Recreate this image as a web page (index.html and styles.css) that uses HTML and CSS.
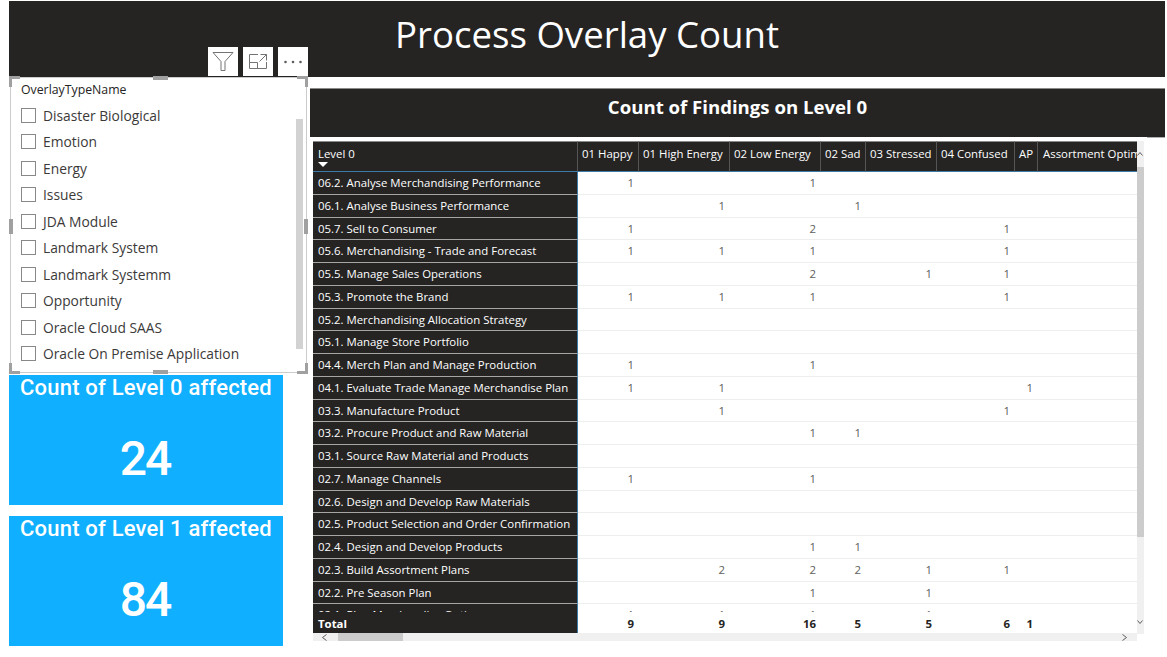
FILE: index.html
```html
<!DOCTYPE html>
<html lang="en">
<head>
  <meta charset="UTF-8" />
  <title>Process Overlay Count</title>
  <link rel="stylesheet" href="styles.css">
</head>
<body>
  <main class="page">
    <header class="page-title">Process Overlay Count</header>

    <section class="cards">
      <div class="card">
        <div class="card-label">Count of Level 0 affected</div>
        <div class="card-value">24</div>
      </div>
      <div class="card">
        <div class="card-label">Count of Level 1 affected</div>
        <div class="card-value">84</div>
      </div>
    </section>

    <section class="report">
      <h2 class="report-title">Count of Findings on Level 0</h2>
      <div class="matrix">
        <div class="matrix-main">
          <div class="row head">
            <div class="label">Level 0<i class="sort"></i></div>
            <div>01 Happy</div><div>01 High Energy</div><div>02 Low Energy</div><div>02 Sad</div><div>03 Stressed</div><div>04 Confused</div><div>AP</div><div class="clip">Assortment Optimisation</div>
          </div>
          <div class="matrix-body">
            <div class="row"><div class="label">06.2. Analyse Merchandising Performance</div><div>1</div><div></div><div>1</div><div></div><div></div><div></div><div></div><div></div></div>
            <div class="row"><div class="label">06.1. Analyse Business Performance</div><div></div><div>1</div><div></div><div>1</div><div></div><div></div><div></div><div></div></div>
            <div class="row"><div class="label">05.7. Sell to Consumer</div><div>1</div><div></div><div>2</div><div></div><div></div><div>1</div><div></div><div></div></div>
            <div class="row"><div class="label">05.6. Merchandising - Trade and Forecast</div><div>1</div><div>1</div><div>1</div><div></div><div></div><div>1</div><div></div><div></div></div>
            <div class="row"><div class="label">05.5. Manage Sales Operations</div><div></div><div></div><div>2</div><div></div><div>1</div><div>1</div><div></div><div></div></div>
            <div class="row"><div class="label">05.3. Promote the Brand</div><div>1</div><div>1</div><div>1</div><div></div><div></div><div>1</div><div></div><div></div></div>
            <div class="row"><div class="label">05.2. Merchandising Allocation Strategy</div><div></div><div></div><div></div><div></div><div></div><div></div><div></div><div></div></div>
            <div class="row"><div class="label">05.1. Manage Store Portfolio</div><div></div><div></div><div></div><div></div><div></div><div></div><div></div><div></div></div>
            <div class="row"><div class="label">04.4. Merch Plan and Manage Production</div><div>1</div><div></div><div>1</div><div></div><div></div><div></div><div></div><div></div></div>
            <div class="row"><div class="label">04.1. Evaluate Trade Manage Merchandise Plan</div><div>1</div><div>1</div><div></div><div></div><div></div><div></div><div>1</div><div></div></div>
            <div class="row"><div class="label">03.3. Manufacture Product</div><div></div><div>1</div><div></div><div></div><div></div><div>1</div><div></div><div></div></div>
            <div class="row"><div class="label">03.2. Procure Product and Raw Material</div><div></div><div></div><div>1</div><div>1</div><div></div><div></div><div></div><div></div></div>
            <div class="row"><div class="label">03.1. Source Raw Material and Products</div><div></div><div></div><div></div><div></div><div></div><div></div><div></div><div></div></div>
            <div class="row"><div class="label">02.7. Manage Channels</div><div>1</div><div></div><div>1</div><div></div><div></div><div></div><div></div><div></div></div>
            <div class="row"><div class="label">02.6. Design and Develop Raw Materials</div><div></div><div></div><div></div><div></div><div></div><div></div><div></div><div></div></div>
            <div class="row"><div class="label">02.5. Product Selection and Order Confirmation</div><div></div><div></div><div></div><div></div><div></div><div></div><div></div><div></div></div>
            <div class="row"><div class="label">02.4. Design and Develop Products</div><div></div><div></div><div>1</div><div>1</div><div></div><div></div><div></div><div></div></div>
            <div class="row"><div class="label">02.3. Build Assortment Plans</div><div></div><div>2</div><div>2</div><div>2</div><div>1</div><div>1</div><div></div><div></div></div>
            <div class="row"><div class="label">02.2. Pre Season Plan</div><div></div><div></div><div>1</div><div></div><div>1</div><div></div><div></div><div></div></div>
            <div class="row"><div class="label">02.1. Plan Merchandise Options</div><div>1</div><div>1</div><div>1</div><div></div><div>1</div><div></div><div></div><div></div></div>
          </div>
          <div class="row total">
            <div class="label">Total</div>
            <div>9</div><div>9</div><div>16</div><div>5</div><div>5</div><div>6</div><div>1</div><div></div>
          </div>
          <div class="hscroll">
            <svg class="chevron" width="5" height="7" viewBox="0 0 5 7"><path d="M4.500 .5l-4 3 4 3"/></svg>
            <i class="hthumb"></i>
            <svg class="chevron next" width="5" height="7" viewBox="0 0 5 7"><path d="M.5 .5l4 3-4 3"/></svg>
          </div>
        </div>
        <div class="vscroll">
          <svg class="chevron up" width="6" height="4" viewBox="0 0 6 4"><path d="M.5 3.500L3 .5l2.500 3"/></svg>
          <i class="vthumb"></i>
          <svg class="chevron down" width="6" height="4" viewBox="0 0 6 4"><path d="M.5 .5L3 3.500 5.500 .5"/></svg>
        </div>
      </div>
    </section>

    <!-- focused slicer sits over the header and the first card -->
    <aside class="slicer">
      <div class="toolbar">
        <button class="tool" type="button">
          <svg width="22" height="19" viewBox="0 0 22 19" fill="none" stroke="#737373" stroke-width="1"><path d="M1 .5h20l-8 9v9h-4v-9z"/></svg>
        </button>
        <button class="tool" type="button">
          <svg width="19" height="15" viewBox="0 0 19 15" fill="none" stroke="#737373" stroke-width="1"><path d="M9 .5H.5v14h17V8M.5 8.500h8v6M11.500 .5h6v6M17.500 .5l-7 7"/></svg>
        </button>
        <button class="tool" type="button">
          <svg width="20" height="4" viewBox="0 0 20 4" fill="#605e5c"><circle cx="2.500" cy="2" r="1.300"/><circle cx="10" cy="2" r="1.300"/><circle cx="17.500" cy="2" r="1.300"/></svg>
        </button>
      </div>
      <i class="handle tl"></i><i class="handle tr"></i><i class="handle bl"></i><i class="handle br"></i>
      <i class="grip top"></i><i class="grip bottom"></i><i class="grip left"></i><i class="grip right"></i>
      <div class="slicer-title">OverlayTypeName</div>
      <ul class="slicer-list">
        <li><i class="check"></i>Disaster Biological</li>
        <li><i class="check"></i>Emotion</li>
        <li><i class="check"></i>Energy</li>
        <li><i class="check"></i>Issues</li>
        <li><i class="check"></i>JDA Module</li>
        <li><i class="check"></i>Landmark System</li>
        <li><i class="check"></i>Landmark Systemm</li>
        <li><i class="check"></i>Opportunity</li>
        <li><i class="check"></i>Oracle Cloud SAAS</li>
        <li><i class="check"></i>Oracle On Premise Application</li>
      </ul>
      <i class="slicer-scroll"></i>
    </aside>
  </main>
</body>
</html>
```

FILE: styles.css
```css
:root {
  --dark: #252423;
  --blue: #11afff;
  --line-blue: #3c7aa8;
  --cols: 265px 61px 91px 91px 45px 71px 78px 23px 99px;
}

* {
  box-sizing: border-box;
}

html, body {
  margin: 0;
  height: 100%;
  overflow: hidden;
  background: #fff;
}

body {
  font-family: 'Open Sans', 'Liberation Sans', Arial, sans-serif;
  color: #252423;
}

.page {
  position: relative;
  display: grid;
  grid-template-columns: 274px 855px;
  grid-template-rows: 76px auto;
  column-gap: 27px;
  padding: 1px 0 0 9px;
}

.page-title {
  grid-column: 1 / -1;
  background: var(--dark);
  color: #fff;
  text-align: center;
  font-size: 36.600px;
  line-height: 67px;
}

/* cards */
.cards {
  display: flex;
  flex-direction: column;
  gap: 10.500px;
  padding-top: 298px;
}

.card {
  height: 130px;
  background: var(--blue);
  color: #fff;
  text-align: center;
  font-family: Roboto, 'Open Sans', sans-serif;
}

.card-label {
  font-size: 22px;
  font-weight: 500;
  line-height: 25px;
  letter-spacing: 0.2px;
}

.card-value {
  margin-top: 27px;
  padding-right: 2px;
  font-size: 48px;
  font-weight: 500;
  line-height: 64px;
  letter-spacing: -2px;
}

/* matrix */
.report {
  padding-top: 11px;
}

.report-title {
  position: relative;
  margin: 0 0 4px;
  height: 49px;
  border-top: 1px solid #8a8a8a;
  background: var(--dark);
  color: #fff;
  text-align: center;
  font-size: 18.600px;
  font-weight: 700;
  line-height: 36px;
}

.report-title::after {
  content: "";
  position: absolute;
  right: 0;
  bottom: -1px;
  width: 18px;
  height: 1px;
  background: #b0b0b0;
}

.matrix {
  display: flex;
  padding-left: 3px;
  font-size: 11.400px;
}

.matrix-main {
  width: 824px;
}

.row {
  display: grid;
  grid-template-columns: var(--cols);
  height: 22.760px;
}

.row > div {
  padding: 0 5px;
  text-align: right;
  line-height: 21px;
  color: #605e5c;
  border-bottom: 1px solid #eee;
  white-space: nowrap;
  overflow: hidden;
}

.row > .label {
  padding: 0 5px;
  background: var(--dark);
  color: #fff;
  text-align: left;
  border-bottom: 1px solid #a6a6a6;
  border-right: 1px solid var(--line-blue);
}

.head {
  height: 31px;
}

.row.head > div {
  position: relative;
  padding: 0 4px;
  background: var(--dark);
  color: #fff;
  line-height: 24px;
  text-align: left;
  border-top: 1px solid #8a8a8a;
  border-right: 1px solid #555;
  border-bottom: 1px solid var(--line-blue);
}

.row.head > .label {
  padding: 0 5px;
  border-right-color: #555;
}

.row.head > .clip {
  padding-left: 5px;
  border-right: 0;
}

.sort {
  position: absolute;
  left: 5px;
  top: 20px;
  border-left: 5px solid transparent;
  border-right: 5px solid transparent;
  border-top: 5px solid #fff;
}

.matrix-body {
  height: 440px;
  overflow: hidden;
}

.total {
  height: 21px;
}

.row.total > div {
  border-bottom: 0;
  color: #252423;
  font-weight: 700;
  line-height: 23px;
}

.row.total > .label {
  color: #fff;
  border-bottom: 0;
}

/* scrollbars */
.chevron {
  display: block;
  fill: none;
  stroke: #605e5c;
  stroke-width: 1;
}

.hscroll {
  display: flex;
  align-items: center;
  height: 8px;
  padding: 0 10px 0 9px;
  background: #f0f0f0;
}

.hthumb {
  width: 65px;
  height: 8px;
  margin-left: 11px;
  background: #ccc;
}

.next {
  margin-left: auto;
}

.vscroll {
  position: relative;
  width: 7px;
  height: 493px;
  background: #f0f0f0;
}

.vthumb {
  position: absolute;
  top: 26px;
  left: 0;
  width: 7px;
  height: 370px;
  background: #ccc;
}

.vscroll .chevron {
  position: absolute;
  left: 0;
}

.up {
  top: 11px;
}

.down {
  top: 479px;
}

/* slicer */
.slicer {
  position: absolute;
  left: 10px;
  top: 77px;
  width: 297px;
  height: 296px;
  background: #fff;
  border: 1px solid #ccc;
}

.toolbar {
  position: absolute;
  right: -2px;
  top: -31px;
  display: flex;
  gap: 5px;
}

.tool {
  display: flex;
  align-items: center;
  justify-content: center;
  width: 30px;
  height: 29px;
  padding: 0;
  border: 0;
  background: #fff;
}

.handle {
  position: absolute;
  width: 11px;
  height: 11px;
  border: 0 solid #a0a0a0;
}

.tl { left: -2px; top: -2px; border-width: 3px 0 0 3px; }
.tr { right: -2px; top: -2px; border-width: 3px 3px 0 0; }
.bl { left: -2px; bottom: -2px; border-width: 0 0 3px 3px; }
.br { right: -2px; bottom: -2px; border-width: 0 3px 3px 0; }

.grip {
  position: absolute;
  background: #a0a0a0;
}

.top, .bottom {
  left: 142px;
  width: 15px;
  height: 4px;
}

.top { top: -2px; }
.bottom { bottom: -2px; }

.left, .right {
  top: 141px;
  width: 4px;
  height: 15px;
}

.left { left: -2px; }
.right { right: -2px; }

.slicer-title {
  padding: 3px 0 0 10px;
  font-size: 12.300px;
  line-height: 18px;
  color: #252423;
}

.slicer-list {
  margin: 3px 0 0;
  padding: 0 0 0 10px;
  list-style: none;
  font-size: 13.800px;
  color: #3b3a39;
}

.slicer-list li {
  display: flex;
  align-items: center;
  gap: 7px;
  height: 26.500px;
}

.check {
  width: 15px;
  height: 15px;
  background: #fff;
  border: 1px solid #8a8886;
}

.slicer-scroll {
  position: absolute;
  left: 285px;
  top: 41px;
  width: 7px;
  height: 230px;
  background: #d2d2d2;
}
```
